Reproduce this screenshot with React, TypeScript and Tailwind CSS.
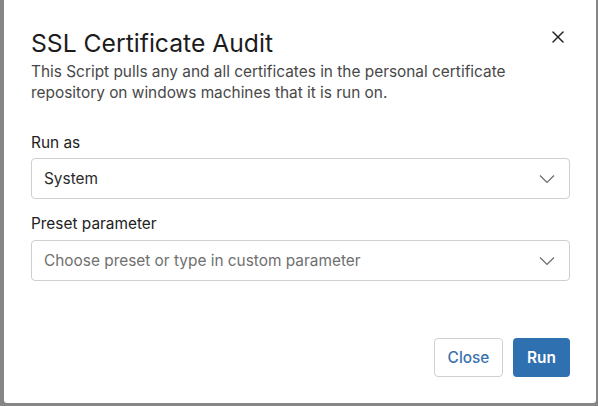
import { X } from 'lucide-react';

const font = { fontFamily: 'Inter, "Noto Sans", sans-serif' };

function Chevron() {
  return (
    <svg width="16" height="10" viewBox="0 0 16 10" fill="none" className="text-[#6a6a6a]">
      <path d="M1 1.5 L8 8.5 L15 1.5" stroke="currentColor" strokeWidth="1.2" />
    </svg>
  );
}

function SelectBox({ value, placeholder }: { value?: string; placeholder?: string }) {
  return (
    <div className="h-[41px] w-full border border-[#cfcfcf] rounded-[4px] bg-white flex items-center pl-[12px] pr-[14px]">
      <span className={`flex-1 text-[15.4px] leading-[21px] ${value ? 'text-[#2b2b2b]' : 'text-[#6f6f6f]'}`}>
        {value ?? placeholder}
      </span>
      <Chevron />
    </div>
  );
}

export default function App() {
  return (
    <div className="w-[598px] h-[406px] bg-[#868686] flex overflow-hidden" style={font}>
      <div className="ml-[4px] mr-[2px] mb-[3px] flex-1 bg-white rounded-b-[3px] flex flex-col pl-[27px] pr-[26px] pt-[27px] pb-[26px]">
        <div className="flex items-start">
          <h1 className="flex-1 text-[24.7px] leading-[32px] text-[#1c1c1c] font-normal">SSL Certificate Audit</h1>
          <button className="mt-0 mr-[2px] text-[#222]">
            <X className="w-[20px] h-[20px]" strokeWidth={1.8} />
          </button>
        </div>
        <p className="mt-[2px] text-[15.4px] leading-[21px] text-[#484848]">
          This Script pulls any and all certificates in the personal certificate repository on windows machines that it is run on.
        </p>

        <label className="mt-[29px] text-[15.4px] leading-[21px] text-[#222]">Run as</label>
        <div className="mt-[5px]">
          <SelectBox value="System" />
        </div>

        <label className="mt-[14px] text-[15.4px] leading-[21px] text-[#222]">Preset parameter</label>
        <div className="mt-[6px]">
          <SelectBox placeholder="Choose preset or type in custom parameter" />
        </div>

        <div className="mt-auto flex justify-end gap-[10px]">
          <button className="h-[39px] w-[69px] border border-[#d0d0d0] rounded-[4px] bg-white text-[15.4px] font-medium text-[#3a72ad]">
            Close
          </button>
          <button className="h-[39px] w-[57px] rounded-[4px] bg-[#2e70b0] text-[15.4px] font-semibold text-white">
            Run
          </button>
        </div>
      </div>
    </div>
  );
}
